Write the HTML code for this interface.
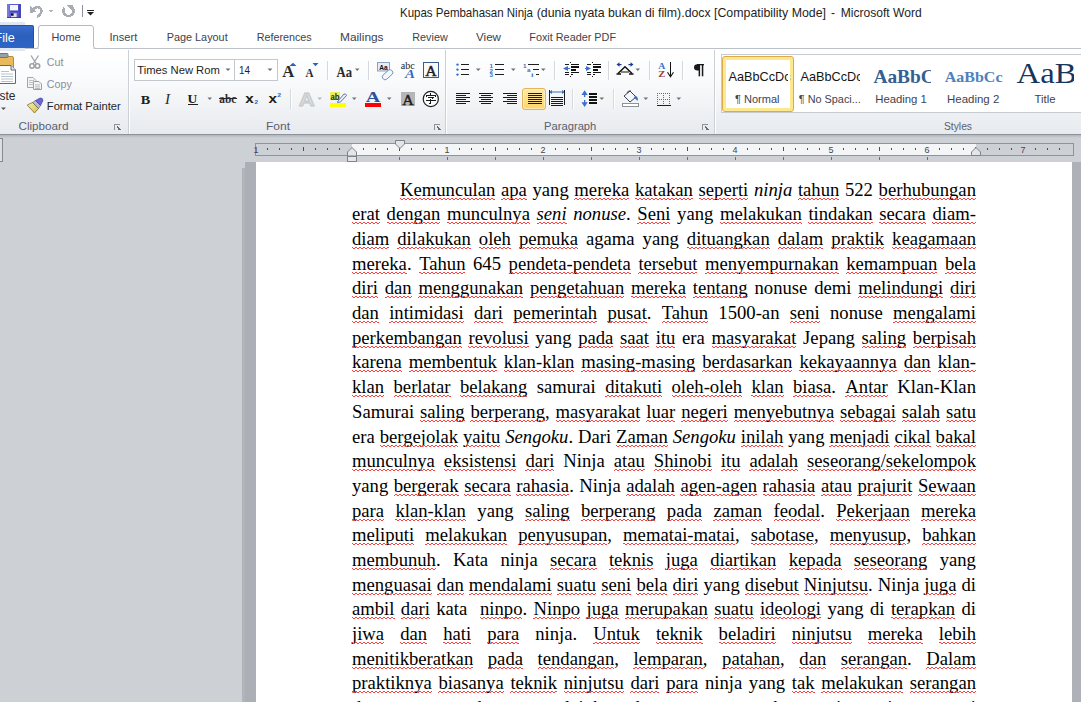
<!DOCTYPE html>
<html><head><meta charset="utf-8"><style>
*{margin:0;padding:0;box-sizing:border-box}
html,body{width:1081px;height:702px;overflow:hidden;background:#cdd0d5;font-family:"Liberation Sans",sans-serif;position:relative}
.a{position:absolute;white-space:nowrap}
#titlebar{position:absolute;left:0;top:0;width:1081px;height:48px;background:#ffffff}
#ribbon{position:absolute;left:0;top:48px;width:1081px;height:86px;background:linear-gradient(#ffffff 0%,#fbfcfd 30%,#eef0f3 75%,#e9ecef 100%);border-top:1px solid #c4c8ce}
#ribbonbottom{position:absolute;left:0;top:134px;width:1081px;height:1px;background:#8f959d}
#rbshade{position:absolute;left:0;top:135px;width:1081px;height:3px;background:linear-gradient(#b7bbc0,#cdd0d5)}
.title{font-size:12px;color:#3c3c3c;top:5px}
.tab{font-size:12px;color:#3b3b3b;top:30px}
.glabel{font-size:12px;color:#5c6270;top:118px}
.sep{position:absolute;width:1px;background:#c9ced5;box-shadow:1px 0 0 #fff}
.gsep{position:absolute;top:53px;height:80px;width:1px;background:#d1d5da;box-shadow:1px 0 0 #ffffff,-1px 0 0 #fbfbfc}
#page{position:absolute;left:256px;top:162px;width:816px;height:540px;background:#fff}
#shadowL{position:absolute;left:245px;top:162px;width:11px;height:540px;background:#acb0b6}
#shadowL2{position:absolute;left:242px;top:168px;width:3px;height:534px;background:#b1b5ba}
#shadowR{position:absolute;left:1072px;top:162px;width:9px;height:540px;background:#aeb2b8}
#text{position:absolute;left:0;top:0}
.ln{position:absolute;left:352px;width:624px;font-family:"Liberation Serif",serif;font-size:18.667px;line-height:20px;color:#000;text-align:justify;text-align-last:justify;white-space:pre-wrap}
.ln.first{left:400px;width:576px}
.s{position:relative}
.s::before,.s::after{content:"";position:absolute;left:0;right:0;height:1px;background-attachment:fixed}
.s::before{top:19.3px;background-image:repeating-linear-gradient(90deg,#ff4040 0 1px,transparent 1px 3px,#ff4040 3px 4px)}
.s::after{top:20.3px;background-image:repeating-linear-gradient(90deg,transparent 0 1px,#ff4040 1px 3px,transparent 3px 4px)}
#ruler{position:absolute;left:255px;top:143px;width:819px;height:13px;border:1px solid #8d929a;background:#ced1d6}
#rulerw{position:absolute;left:352px;top:144px;width:624px;height:11px;background:#f5f6f7}
.rn{position:absolute;font-size:10px;color:#5a5a5a;top:143px}
.rd{position:absolute;width:1px;height:2px;background:#505050;top:148px}
.rt{position:absolute;width:1px;height:4px;background:#505050;top:147px}
.tb{position:absolute;width:1px;height:3px;background:#6e7379;top:157px}

</style></head><body>
<svg id="rsvg" width="1081" height="162" viewBox="0 0 1081 162" style="position:absolute;left:0;top:0" shape-rendering="crispEdges">
<defs>
<linearGradient id="ribg" x1="0" y1="0" x2="0" y2="1"><stop offset="0" stop-color="#ffffff"/><stop offset="0.35" stop-color="#fafbfc"/><stop offset="1" stop-color="#e7eaee"/></linearGradient>
<linearGradient id="fileg" x1="0" y1="0" x2="0" y2="1"><stop offset="0" stop-color="#3a6fcf"/><stop offset="0.5" stop-color="#2b5fbd"/><stop offset="1" stop-color="#2e66c6"/></linearGradient>
<linearGradient id="shd" x1="0" y1="0" x2="0" y2="1"><stop offset="0" stop-color="#b3b7bc"/><stop offset="1" stop-color="#cdd0d5"/></linearGradient>
<linearGradient id="selg" x1="0" y1="0" x2="0" y2="1"><stop offset="0" stop-color="#fde9a8"/><stop offset="1" stop-color="#fbd568"/></linearGradient>
</defs>
<rect x="0" y="0" width="1081" height="49" fill="#ffffff"/>
<rect x="0" y="49" width="1081" height="85" fill="url(#ribg)"/>
<rect x="0" y="48" width="1081" height="1" fill="#bcc1c8"/>
<rect x="0" y="134" width="1081" height="1" fill="#8d939b"/>
<rect x="0" y="135" width="1081" height="3" fill="url(#shd)"/>
<rect x="0" y="138" width="1081" height="24" fill="#cdd0d5"/>
<g shape-rendering="geometricPrecision">
<rect x="7" y="4" width="14" height="14" fill="#5b5dd2"/>
<rect x="7" y="4" width="2.5" height="14" fill="#7778e2"/>
<rect x="18.5" y="4" width="2.5" height="14" fill="#4446b4"/>
<rect x="7" y="17" width="14" height="1" fill="#3c3e9e"/>
<rect x="10" y="5" width="8" height="6" fill="#f4f6fb"/>
<rect x="10" y="10.5" width="8" height="1.2" fill="#3b3da8"/>
<rect x="11" y="13.3" width="5.6" height="3.8" fill="#dfe2ea"/>
<rect x="11" y="13.3" width="2.6" height="2.4" fill="#111"/>
</g>
<path d="M33 9 Q38 5 41 9 Q43 13 37 17" fill="none" stroke="#a9adb3" stroke-width="2.6"/>
<path d="M30 6 L30 13 L36 12 Z" fill="#a9adb3"/>
<path d="M48 10 L53 10 L50.5 12.5 Z" fill="#b0b4b9"/>
<path d="M64.5 8 A5 5 0 1 0 72.5 8" fill="none" stroke="#a9adb3" stroke-width="2.6"/>
<path d="M66 5 L73 4.5 L72 11 Z" fill="#a9adb3"/>
</g>
<rect x="82" y="5" width="1" height="12" fill="#8c9097"/>
<rect x="87" y="10" width="7" height="1" fill="#222"/>
<path d="M87 12 L94 12 L90.5 15.5 Z" fill="#222" shape-rendering="geometricPrecision"/>
<text x="400" y="16.7" font-family="Liberation Sans" font-size="12.4" fill="#1e1e1e" font-weight="normal" font-style="normal" text-anchor="start" textLength="133" lengthAdjust="spacingAndGlyphs" >Kupas Pembahasan Ninja</text>
<text x="536.7" y="16.7" font-family="Liberation Sans" font-size="12.4" fill="#1e1e1e" font-weight="normal" font-style="normal" text-anchor="start" textLength="174" lengthAdjust="spacingAndGlyphs" >(dunia nyata bukan di film).docx</text>
<text x="714" y="16.7" font-family="Liberation Sans" font-size="12.4" fill="#1e1e1e" font-weight="normal" font-style="normal" text-anchor="start" textLength="112" lengthAdjust="spacingAndGlyphs" >[Compatibility Mode]</text>
<text x="831" y="16.7" font-family="Liberation Sans" font-size="12.4" fill="#1e1e1e" font-weight="normal" font-style="normal" text-anchor="start" textLength="4" lengthAdjust="spacingAndGlyphs" >-</text>
<text x="840.7" y="16.7" font-family="Liberation Sans" font-size="12.4" fill="#1e1e1e" font-weight="normal" font-style="normal" text-anchor="start" textLength="81" lengthAdjust="spacingAndGlyphs" >Microsoft Word</text>
<rect x="0" y="22" width="25" height="3" fill="#dfe7f3"/>
<rect x="0" y="48" width="25" height="3" fill="#dfe7f3"/>
<path d="M0 25 L32 25 Q34 25 34 27 L34 48 L0 48 Z" fill="url(#fileg)" stroke="none" shape-rendering="geometricPrecision"/>
<path d="M0 25.5 L31.5 25.5 Q33.5 25.5 33.5 27.5 L33.5 48" fill="none" stroke="#2450a8" shape-rendering="geometricPrecision"/>
<text x="14.7" y="41.6" font-family="Liberation Sans" font-size="12.5" fill="#ffffff" font-weight="normal" font-style="normal" text-anchor="end" >File</text>
<path d="M34 48.5 L36 48.5 Q38.5 48.5 38.5 46 L38.5 28 Q38.5 25.5 41 25.5 L91 25.5 Q93.5 25.5 93.5 28 L93.5 46 Q93.5 48.5 96 48.5" fill="#ffffff" stroke="#b6bbc2" shape-rendering="geometricPrecision"/>
<rect x="39" y="47" width="54" height="3" fill="#ffffff"/>
<text x="51.5" y="40.7" font-family="Liberation Sans" font-size="11.5" fill="#3e434a" font-weight="normal" font-style="normal" text-anchor="start" textLength="29" lengthAdjust="spacingAndGlyphs" >Home</text>
<text x="109.5" y="40.7" font-family="Liberation Sans" font-size="11.5" fill="#3e434a" font-weight="normal" font-style="normal" text-anchor="start" textLength="27.8" lengthAdjust="spacingAndGlyphs" >Insert</text>
<text x="166.7" y="40.7" font-family="Liberation Sans" font-size="11.5" fill="#3e434a" font-weight="normal" font-style="normal" text-anchor="start" textLength="61" lengthAdjust="spacingAndGlyphs" >Page Layout</text>
<text x="256.7" y="40.7" font-family="Liberation Sans" font-size="11.5" fill="#3e434a" font-weight="normal" font-style="normal" text-anchor="start" textLength="55" lengthAdjust="spacingAndGlyphs" >References</text>
<text x="340" y="40.7" font-family="Liberation Sans" font-size="11.5" fill="#3e434a" font-weight="normal" font-style="normal" text-anchor="start" textLength="43.5" lengthAdjust="spacingAndGlyphs" >Mailings</text>
<text x="412.3" y="40.7" font-family="Liberation Sans" font-size="11.5" fill="#3e434a" font-weight="normal" font-style="normal" text-anchor="start" textLength="35.4" lengthAdjust="spacingAndGlyphs" >Review</text>
<text x="476" y="40.7" font-family="Liberation Sans" font-size="11.5" fill="#3e434a" font-weight="normal" font-style="normal" text-anchor="start" textLength="25" lengthAdjust="spacingAndGlyphs" >View</text>
<text x="529.3" y="40.7" font-family="Liberation Sans" font-size="11.5" fill="#3e434a" font-weight="normal" font-style="normal" text-anchor="start" textLength="86.7" lengthAdjust="spacingAndGlyphs" >Foxit Reader PDF</text>
<rect x="128" y="50" width="1" height="84" fill="#cbd0d6"/>
<rect x="129" y="50" width="1" height="84" fill="#ffffff"/>
<rect x="445" y="50" width="1" height="84" fill="#cbd0d6"/>
<rect x="446" y="50" width="1" height="84" fill="#ffffff"/>
<rect x="714" y="50" width="1" height="84" fill="#cbd0d6"/>
<rect x="715" y="50" width="1" height="84" fill="#ffffff"/>
<text x="18.5" y="130.4" font-family="Liberation Sans" font-size="11.5" fill="#5a6070" font-weight="normal" font-style="normal" text-anchor="start" textLength="50" lengthAdjust="spacingAndGlyphs" >Clipboard</text>
<text x="266" y="130.4" font-family="Liberation Sans" font-size="11.5" fill="#5a6070" font-weight="normal" font-style="normal" text-anchor="start" textLength="24" lengthAdjust="spacingAndGlyphs" >Font</text>
<text x="544.1" y="130.4" font-family="Liberation Sans" font-size="11.5" fill="#5a6070" font-weight="normal" font-style="normal" text-anchor="start" textLength="52.2" lengthAdjust="spacingAndGlyphs" >Paragraph</text>
<text x="944" y="130.4" font-family="Liberation Sans" font-size="11.5" fill="#5a6070" font-weight="normal" font-style="normal" text-anchor="start" textLength="28" lengthAdjust="spacingAndGlyphs" >Styles</text>
<g fill="none" stroke="#8d9299" shape-rendering="crispEdges"><path d="M114.5 130 L114.5 124.5 L120 124.5"/><path d="M117 126 L120 130 M117.5 129.5 L121 129.5" stroke="#6b7078"/></g>
<g fill="none" stroke="#8d9299" shape-rendering="crispEdges"><path d="M434.5 130 L434.5 124.5 L440 124.5"/><path d="M437 126 L440 130 M437.5 129.5 L441 129.5" stroke="#6b7078"/></g>
<g fill="none" stroke="#8d9299" shape-rendering="crispEdges"><path d="M702.5 130 L702.5 124.5 L708 124.5"/><path d="M705 126 L708 130 M705.5 129.5 L709 129.5" stroke="#6b7078"/></g>
<g shape-rendering="geometricPrecision">
<rect x="-3.5" y="56.5" width="17" height="14" rx="1.5" fill="#e9b95c" stroke="#b98a3a"/>
<rect x="-2" y="53.5" width="10" height="4" rx="1" fill="#9aa0a8" stroke="#6f757d"/>
<path d="M-1.5 65.5 L11 65.5 L15.5 70 L15.5 83.5 L-1.5 83.5 Z" fill="#ffffff" stroke="#5d6c82"/>
<path d="M11 65.5 L11 70 L15.5 70" fill="#dfe6ef" stroke="#5d6c82"/>
<rect x="1" y="71" width="8" height="1" fill="#b8c2cf"/>
<rect x="1" y="73.5" width="12" height="1" fill="#b8c2cf"/>
<rect x="1" y="76" width="12" height="1" fill="#b8c2cf"/>
<rect x="1" y="78.5" width="12" height="1" fill="#b8c2cf"/>
<rect x="1" y="81" width="12" height="1" fill="#b8c2cf"/>
</g>
<text x="15.5" y="100" font-family="Liberation Sans" font-size="12" fill="#2b2b2b" font-weight="normal" font-style="normal" text-anchor="end" >Paste</text>
<path d="M1 107.5 L6 107.5 L3.5 110 Z" fill="#555" shape-rendering="geometricPrecision"/>
<g shape-rendering="geometricPrecision" fill="none" stroke="#9ea2a8" stroke-width="1.3">
<path d="M31 55.5 L36.5 64 M38.5 55.5 L33 64"/>
<circle cx="32" cy="66" r="2.2" stroke-width="1.6"/><circle cx="37.5" cy="66" r="2.2" stroke-width="1.6"/>
</g>
<text x="46.8" y="65.9" font-family="Liberation Sans" font-size="11.5" fill="#8b8f9c" font-weight="normal" font-style="normal" text-anchor="start" textLength="16.6" lengthAdjust="spacingAndGlyphs" >Cut</text>
<g shape-rendering="geometricPrecision">
<path d="M27.5 77.5 L33 77.5 L36 80.5 L36 87.5 L27.5 87.5 Z" fill="#f4f4f4" stroke="#a3a7ad"/>
<path d="M33.5 81.5 L39 81.5 L41.5 84 L41.5 89.5 L33.5 89.5 Z" fill="#f4f4f4" stroke="#9b9fa5"/>
<rect x="29" y="80" width="5" height="0.8" fill="#b0b4ba"/>
<rect x="29" y="82" width="5" height="0.8" fill="#b0b4ba"/>
<rect x="29" y="84" width="5" height="0.8" fill="#b0b4ba"/>
<rect x="35" y="84.5" width="5" height="0.8" fill="#a9adb3"/>
<rect x="35" y="86.5" width="5" height="0.8" fill="#a9adb3"/>
<rect x="35" y="88" width="5" height="0.8" fill="#a9adb3"/>
</g>
<text x="46.8" y="87.6" font-family="Liberation Sans" font-size="11.5" fill="#8b8f9c" font-weight="normal" font-style="normal" text-anchor="start" textLength="25" lengthAdjust="spacingAndGlyphs" >Copy</text>
<defs><linearGradient id="brg" x1="0" y1="0" x2="1" y2="1"><stop offset="0" stop-color="#fbf3a8"/><stop offset="1" stop-color="#d6bd48"/></linearGradient></defs>
<g shape-rendering="geometricPrecision">
<path d="M27.2 105 L32.5 102.5 L38.5 108.5 L34.5 113 Z" fill="url(#brg)" stroke="#6e5e22" stroke-width="0.7"/>
<path d="M32.5 102.5 L35.5 100.5 L40.5 105.5 L38.5 108.5 Z" fill="#b8bcc6" stroke="#50555e" stroke-width="0.6"/>
<path d="M35.5 100.5 L40 98 Q42.8 97.5 43 100.5 L40.5 105.5 Z" fill="#6a64d6" stroke="#3a3490" stroke-width="0.6"/>
</g>
<text x="46.8" y="110.2" font-family="Liberation Sans" font-size="11.5" fill="#262626" font-weight="normal" font-style="normal" text-anchor="start" textLength="74" lengthAdjust="spacingAndGlyphs" >Format Painter</text>
<rect x="134.5" y="59.5" width="143" height="21" fill="#ffffff" stroke="#c3c8cf"/>
<rect x="234" y="60" width="1" height="20" fill="#c3c8cf"/>
<text x="137.3" y="73.9" font-family="Liberation Sans" font-size="11.5" fill="#1e1e1e" font-weight="normal" font-style="normal" text-anchor="start" textLength="82.5" lengthAdjust="spacingAndGlyphs" >Times New Rom</text>
<rect x="219.5" y="62" width="3" height="16" fill="#ffffff"/>
<path d="M225.5 68.5 L230.5 68.5 L228 71 Z" fill="#6d7177" shape-rendering="geometricPrecision"/>
<text x="239" y="73.9" font-family="Liberation Sans" font-size="11.5" fill="#1e1e1e" font-weight="normal" font-style="normal" text-anchor="start" textLength="11" lengthAdjust="spacingAndGlyphs" >14</text>
<path d="M267.5 68.5 L272.5 68.5 L270 71 Z" fill="#6d7177" shape-rendering="geometricPrecision"/>
<text x="282.3" y="77.2" font-family="Liberation Serif" font-size="17.5" fill="#2a2a2a" font-weight="bold" font-style="normal" text-anchor="start" textLength="12" lengthAdjust="spacingAndGlyphs" >A</text>
<path d="M289.5 66 L293 62.8 L296.5 66 Z" fill="#2f5fb5" shape-rendering="geometricPrecision"/>
<text x="305.5" y="77.2" font-family="Liberation Serif" font-size="11.5" fill="#2a2a2a" font-weight="bold" font-style="normal" text-anchor="start" textLength="8" lengthAdjust="spacingAndGlyphs" >A</text>
<path d="M312.5 63 L318.5 63 L315.5 66.2 Z" fill="#2f5fb5" shape-rendering="geometricPrecision"/>
<rect x="327" y="61" width="1" height="19" fill="#d5d9de"/><rect x="328" y="61" width="1" height="19" fill="#fff"/>
<text x="336.5" y="76.5" font-family="Liberation Serif" font-size="14" fill="#2a2a2a" font-weight="bold" font-style="normal" text-anchor="start" textLength="15.5" lengthAdjust="spacingAndGlyphs" >Aa</text>
<path d="M355 68.5 L359.5 68.5 L357.2 71 Z" fill="#6d7177" shape-rendering="geometricPrecision"/>
<rect x="368" y="61" width="1" height="19" fill="#d5d9de"/><rect x="369" y="61" width="1" height="19" fill="#fff"/>
<g shape-rendering="geometricPrecision">
<rect x="377.5" y="62.5" width="12" height="8.5" fill="#e3ecf8" stroke="#8aa3c4"/>
<text x="379.2" y="69.8" font-family="Liberation Sans" font-size="7" fill="#111111" font-weight="bold" font-style="normal" text-anchor="start" textLength="8.5" lengthAdjust="spacingAndGlyphs" >Aa</text>
<rect x="381.5" y="72" width="12" height="5.5" rx="2.5" transform="rotate(-42 387.5 74.7)" fill="#f4f7fc" stroke="#6a8dc0" stroke-width="0.9"/>
</g>
<text x="400.8" y="68.8" font-family="Liberation Serif" font-size="10.5" fill="#222222" font-weight="normal" font-style="normal" text-anchor="start" textLength="14" lengthAdjust="spacingAndGlyphs" >abc</text>
<text x="405" y="78.3" font-family="Liberation Serif" font-size="11.5" fill="#3567c0" font-weight="bold" font-style="italic" text-anchor="start" textLength="10" lengthAdjust="spacingAndGlyphs" >A</text>
<rect x="423.5" y="62.5" width="15" height="15" fill="#fafafa" stroke="#3c5d8c"/>
<text x="425.3" y="76" font-family="Liberation Serif" font-size="15" fill="#1e1e1e" font-weight="normal" font-style="normal" text-anchor="start" textLength="11.5" lengthAdjust="spacingAndGlyphs" stroke="#1e1e1e" stroke-width="0.45">A</text>
<text x="140.7" y="103.6" font-family="Liberation Serif" font-size="13.5" fill="#1e1e1e" font-weight="bold" font-style="normal" text-anchor="start" textLength="9.5" lengthAdjust="spacingAndGlyphs" >B</text>
<text x="165" y="103.6" font-family="Liberation Serif" font-size="15" fill="#2a2a2a" font-weight="normal" font-style="italic" text-anchor="start" >I</text>
<text x="187.6" y="103.3" font-family="Liberation Serif" font-size="13" fill="#1e1e1e" font-weight="bold" font-style="normal" text-anchor="start" textLength="9.7" lengthAdjust="spacingAndGlyphs" >U</text>
<rect x="187.5" y="104" width="10" height="1" fill="#1e1e1e"/>
<path d="M207.5 97.5 L212 97.5 L209.7 100 Z" fill="#6d7177" shape-rendering="geometricPrecision"/>
<text x="219.3" y="102.7" font-family="Liberation Serif" font-size="11.5" fill="#2a2a2a" font-weight="bold" font-style="normal" text-anchor="start" textLength="17" lengthAdjust="spacingAndGlyphs" >abc</text>
<rect x="219" y="98" width="17.5" height="1" fill="#2a2a2a"/>
<text x="245.3" y="103.3" font-family="Liberation Sans" font-size="13.5" fill="#1e1e1e" font-weight="bold" font-style="normal" text-anchor="start" textLength="8.5" lengthAdjust="spacingAndGlyphs" >x</text>
<text x="254.5" y="104.3" font-family="Liberation Sans" font-size="5.5" fill="#2f5fb5" font-weight="bold" font-style="normal" text-anchor="start" textLength="3.5" lengthAdjust="spacingAndGlyphs" >2</text>
<text x="268.4" y="103.3" font-family="Liberation Sans" font-size="13.5" fill="#1e1e1e" font-weight="bold" font-style="normal" text-anchor="start" textLength="8.5" lengthAdjust="spacingAndGlyphs" >x</text>
<text x="277.5" y="97.3" font-family="Liberation Sans" font-size="5.5" fill="#2f5fb5" font-weight="bold" font-style="normal" text-anchor="start" textLength="3.5" lengthAdjust="spacingAndGlyphs" >2</text>
<rect x="290" y="89" width="1" height="20" fill="#d5d9de"/><rect x="291" y="89" width="1" height="20" fill="#fff"/>
<text x="298.8" y="105.8" font-family="Liberation Sans" font-size="18" fill="#d8dadd" font-weight="bold" font-style="normal" text-anchor="start" textLength="16" lengthAdjust="spacingAndGlyphs" stroke="#c3c6ca" stroke-width="0.8">A</text>
<path d="M317.5 97.5 L322 97.5 L319.7 100 Z" fill="#b3b6ba" shape-rendering="geometricPrecision"/>
<rect x="330" y="103" width="16" height="4" fill="#ffff00"/>
<rect x="330" y="92" width="10" height="8" fill="#f0ee60"/>
<text x="330.5" y="99.5" font-family="Liberation Sans" font-size="8.5" fill="#1e1e1e" font-weight="bold" font-style="normal" text-anchor="start" textLength="9" lengthAdjust="spacingAndGlyphs" >ab</text>
<path d="M338 101 L344 94 Q346 93.5 346.5 95.5 L340.5 102 L337.5 102.5 Z" fill="#e6eef8" stroke="#4a6fa8" stroke-width="0.9" shape-rendering="geometricPrecision"/>
<path d="M352 97.5 L356.5 97.5 L354.2 100 Z" fill="#6d7177" shape-rendering="geometricPrecision"/>
<text x="365.8" y="102.3" font-family="Liberation Serif" font-size="14.5" fill="#2f4f9a" font-weight="bold" font-style="normal" text-anchor="start" textLength="14.5" lengthAdjust="spacingAndGlyphs" >A</text>
<rect x="365" y="103" width="16" height="4" fill="#ff0000"/>
<path d="M387 97.5 L391.5 97.5 L389.2 100 Z" fill="#6d7177" shape-rendering="geometricPrecision"/>
<rect x="401" y="92" width="14" height="14" fill="#b6b6b6"/>
<text x="402.3" y="104.5" font-family="Liberation Serif" font-size="15" fill="#1e1e1e" font-weight="normal" font-style="normal" text-anchor="start" textLength="11.5" lengthAdjust="spacingAndGlyphs" stroke="#1e1e1e" stroke-width="0.45">A</text>
<circle cx="430.8" cy="99" r="7.6" fill="#fafafa" stroke="#1e1e1e" stroke-width="1.2" shape-rendering="geometricPrecision"/>
<g fill="#1a1a1a" shape-rendering="crispEdges"><rect x="430" y="93" width="1" height="2"/><rect x="426" y="95" width="10" height="1"/><rect x="426" y="95" width="1" height="2"/><rect x="435" y="95" width="1" height="2"/><rect x="428" y="97" width="6" height="1"/><rect x="432" y="98" width="1" height="1"/><rect x="426" y="100" width="10" height="1"/><rect x="430" y="99" width="1" height="5"/><rect x="429" y="103" width="1" height="1"/></g>
<circle cx="457.5" cy="64.6" r="1.2" fill="#3a6fc4" shape-rendering="geometricPrecision"/>
<circle cx="457.5" cy="69.6" r="1.2" fill="#3a6fc4" shape-rendering="geometricPrecision"/>
<circle cx="457.5" cy="74.6" r="1.2" fill="#3a6fc4" shape-rendering="geometricPrecision"/>
<rect x="461" y="64" width="8" height="1.2" fill="#1e1e1e"/>
<rect x="461" y="69" width="8" height="1.2" fill="#1e1e1e"/>
<rect x="461" y="74" width="8" height="1.2" fill="#1e1e1e"/>
<path d="M476 68.5 L480.6 68.5 L478.3 71.0 Z" fill="#6d7177" shape-rendering="geometricPrecision"/>
<text x="489.5" y="67.5" font-family="Liberation Sans" font-size="6" fill="#3a6fc4" font-weight="bold" font-style="normal" text-anchor="start" textLength="3.5" lengthAdjust="spacingAndGlyphs" >1</text>
<text x="489.5" y="72.5" font-family="Liberation Sans" font-size="6" fill="#3a6fc4" font-weight="bold" font-style="normal" text-anchor="start" textLength="3.5" lengthAdjust="spacingAndGlyphs" >2</text>
<text x="489.5" y="77" font-family="Liberation Sans" font-size="6" fill="#3a6fc4" font-weight="bold" font-style="normal" text-anchor="start" textLength="3.5" lengthAdjust="spacingAndGlyphs" >3</text>
<rect x="495" y="64" width="9" height="1.2" fill="#1e1e1e"/>
<rect x="495" y="69" width="9" height="1.2" fill="#1e1e1e"/>
<rect x="495" y="74" width="9" height="1.2" fill="#1e1e1e"/>
<path d="M511 68.5 L515.6 68.5 L513.3 71.0 Z" fill="#6d7177" shape-rendering="geometricPrecision"/>
<text x="523" y="67.5" font-family="Liberation Sans" font-size="6" fill="#3a6fc4" font-weight="bold" font-style="normal" text-anchor="start" textLength="3.5" lengthAdjust="spacingAndGlyphs" >1</text>
<text x="527" y="72" font-family="Liberation Sans" font-size="6" fill="#3a6fc4" font-weight="bold" font-style="normal" text-anchor="start" textLength="3.5" lengthAdjust="spacingAndGlyphs" >a</text>
<text x="531" y="77" font-family="Liberation Sans" font-size="6" fill="#3a6fc4" font-weight="bold" font-style="normal" text-anchor="start" textLength="2.5" lengthAdjust="spacingAndGlyphs" >i</text>
<rect x="528" y="64" width="11" height="1.2" fill="#1e1e1e"/>
<rect x="533" y="69" width="6" height="1.2" fill="#1e1e1e"/>
<rect x="536" y="74" width="3" height="1.2" fill="#1e1e1e"/>
<path d="M541 68.5 L545.6 68.5 L543.3 71.0 Z" fill="#6d7177" shape-rendering="geometricPrecision"/>
<rect x="554" y="61" width="1" height="19" fill="#d5d9de"/><rect x="555" y="61" width="1" height="19" fill="#fff"/>
<rect x="570" y="62" width="1" height="1" fill="#1a1a1a"/><rect x="570" y="76" width="1" height="1" fill="#1a1a1a"/>
<rect x="565" y="64" width="4" height="1" fill="#1a1a1a"/>
<rect x="565" y="72" width="4" height="1" fill="#1a1a1a"/>
<rect x="565" y="74" width="4" height="1" fill="#1a1a1a"/>
<rect x="571" y="64" width="8" height="1" fill="#111"/>
<rect x="571" y="66" width="8" height="2" fill="#111"/>
<rect x="571" y="69" width="5" height="2" fill="#111"/>
<rect x="571" y="72" width="8" height="1" fill="#111"/>
<rect x="571" y="74" width="2" height="1" fill="#111"/>
<path d="M563 68.5 L568 66 L568 71 Z" fill="#3a6fd0" shape-rendering="geometricPrecision"/>
<rect x="567.5" y="68" width="2" height="1.2" fill="#3a6fd0"/>
<rect x="592" y="62" width="1" height="1" fill="#1a1a1a"/><rect x="592" y="76" width="1" height="1" fill="#1a1a1a"/>
<rect x="587" y="64" width="4" height="1" fill="#1a1a1a"/>
<rect x="587" y="72" width="4" height="1" fill="#1a1a1a"/>
<rect x="587" y="74" width="4" height="1" fill="#1a1a1a"/>
<rect x="593" y="64" width="8" height="1" fill="#111"/>
<rect x="593" y="66" width="8" height="2" fill="#111"/>
<rect x="593" y="69" width="5" height="2" fill="#111"/>
<rect x="593" y="72" width="8" height="1" fill="#111"/>
<rect x="593" y="74" width="2" height="1" fill="#111"/>
<path d="M591 68.5 L586 66 L586 71 Z" fill="#3a6fd0" shape-rendering="geometricPrecision"/>
<rect x="585" y="68" width="2" height="1.2" fill="#3a6fd0"/>
<rect x="608" y="61" width="1" height="19" fill="#d5d9de"/><rect x="609" y="61" width="1" height="19" fill="#fff"/>
<g shape-rendering="geometricPrecision" fill="none" stroke="#111" stroke-width="1.5"><path d="M618 73.5 L625 66.8 L632 73.5"/><path d="M616.5 74 L621 74 M629 74 L633.5 74" stroke-width="1.3"/><path d="M621 72 L629 72" stroke-width="1"/></g>
<g shape-rendering="geometricPrecision" fill="#1a3a9a"><path d="M616.5 64.5 L619.5 62.3 L619.5 66.7 Z M633.5 64.5 L630.5 62.3 L630.5 66.7 Z"/><rect x="619" y="64" width="2.5" height="1.2"/><rect x="628.5" y="64" width="2.5" height="1.2"/></g>
<path d="M635.5 68.5 L640.1 68.5 L637.8 71.0 Z" fill="#6d7177" shape-rendering="geometricPrecision"/>
<rect x="649" y="61" width="1" height="19" fill="#d5d9de"/><rect x="650" y="61" width="1" height="19" fill="#fff"/>
<text x="658.3" y="69" font-family="Liberation Serif" font-size="8.5" fill="#3a6fc4" font-weight="bold" font-style="normal" text-anchor="start" textLength="7" lengthAdjust="spacingAndGlyphs" >A</text>
<text x="658.3" y="77" font-family="Liberation Serif" font-size="8.5" fill="#a33a3a" font-weight="bold" font-style="normal" text-anchor="start" textLength="7" lengthAdjust="spacingAndGlyphs" >Z</text>
<rect x="670" y="62" width="1" height="14.5" fill="#111"/>
<path d="M667.5 72.3 L670.5 76.8 L673.5 72.3" fill="none" stroke="#111" stroke-width="1.1" shape-rendering="geometricPrecision"/>
<rect x="682" y="61" width="1" height="19" fill="#d5d9de"/><rect x="683" y="61" width="1" height="19" fill="#fff"/>
<g shape-rendering="geometricPrecision" fill="#1a1a1a"><path d="M699.5 64.2 L697.5 64.2 Q694 64.2 694 67.3 Q694 70.5 697.5 70.5 L699.5 70.5 Z"/><rect x="698.6" y="64" width="1.5" height="12.3"/><rect x="701.8" y="64" width="1.5" height="12.3"/><rect x="697" y="64" width="7" height="1.3"/></g>
<rect x="456" y="93" width="14" height="1" fill="#1a1a1a"/>
<rect x="456" y="95" width="10" height="1" fill="#1a1a1a"/>
<rect x="456" y="97" width="14" height="1" fill="#1a1a1a"/>
<rect x="456" y="99" width="10" height="1" fill="#1a1a1a"/>
<rect x="456" y="101" width="14" height="1" fill="#1a1a1a"/>
<rect x="456" y="103" width="10" height="1" fill="#1a1a1a"/>
<rect x="479.0" y="93" width="14" height="1" fill="#1a1a1a"/>
<rect x="481.0" y="95" width="10" height="1" fill="#1a1a1a"/>
<rect x="479.0" y="97" width="14" height="1" fill="#1a1a1a"/>
<rect x="481.0" y="99" width="10" height="1" fill="#1a1a1a"/>
<rect x="479.0" y="101" width="14" height="1" fill="#1a1a1a"/>
<rect x="481.0" y="103" width="10" height="1" fill="#1a1a1a"/>
<rect x="503" y="93" width="14" height="1" fill="#1a1a1a"/>
<rect x="507" y="95" width="10" height="1" fill="#1a1a1a"/>
<rect x="503" y="97" width="14" height="1" fill="#1a1a1a"/>
<rect x="507" y="99" width="10" height="1" fill="#1a1a1a"/>
<rect x="503" y="101" width="14" height="1" fill="#1a1a1a"/>
<rect x="507" y="103" width="10" height="1" fill="#1a1a1a"/>
<rect x="522.5" y="88.5" width="23" height="21" rx="2.5" fill="url(#selg)" stroke="#e3b45a" shape-rendering="geometricPrecision"/>
<rect x="523.5" y="89.5" width="21" height="19" rx="2" fill="none" stroke="#fff4c8" stroke-opacity="0.7" shape-rendering="geometricPrecision"/>
<rect x="527.5" y="93" width="14" height="1" fill="#1a1a1a"/>
<rect x="527.5" y="95" width="14" height="1" fill="#1a1a1a"/>
<rect x="527.5" y="97" width="14" height="1" fill="#1a1a1a"/>
<rect x="527.5" y="99" width="14" height="1" fill="#1a1a1a"/>
<rect x="527.5" y="101" width="14" height="1" fill="#1a1a1a"/>
<rect x="527.5" y="103" width="14" height="1" fill="#1a1a1a"/>
<g shape-rendering="geometricPrecision">
<path d="M551 92 L563 92" stroke="#3a6fc4" stroke-width="1"/><path d="M549 92 L552 90 L552 94 Z M565 92 L562 90 L562 94 Z" fill="#3a6fc4"/>
<rect x="549" y="90" width="1" height="15" fill="#1e1e1e"/><rect x="564" y="90" width="1" height="15" fill="#1e1e1e"/>
</g>
<rect x="551" y="97" width="12" height="1" fill="#1a1a1a"/>
<rect x="551" y="99" width="12" height="1" fill="#1a1a1a"/>
<rect x="551" y="101" width="12" height="1" fill="#1a1a1a"/>
<rect x="551" y="103" width="12" height="1" fill="#1a1a1a"/>
<rect x="551" y="105" width="12" height="1" fill="#1a1a1a"/>
<rect x="572" y="89" width="1" height="20" fill="#d5d9de"/><rect x="573" y="89" width="1" height="20" fill="#fff"/>
<g shape-rendering="geometricPrecision" fill="#3a6fd0"><path d="M581.5 95 L584.6 90.3 L587.7 95 Z M581.5 102.3 L584.6 107 L587.7 102.3 Z"/><rect x="584" y="93" width="1.3" height="4"/><rect x="584" y="100" width="1.3" height="4"/></g>
<rect x="589" y="93.3" width="8" height="1.5" fill="#111"/>
<rect x="589" y="96.3" width="8" height="1.5" fill="#111"/>
<rect x="589" y="99.3" width="8" height="1.5" fill="#111"/>
<rect x="589" y="102.3" width="8" height="1.5" fill="#111"/>
<path d="M599.5 97.5 L604.1 97.5 L601.8 100.0 Z" fill="#6d7177" shape-rendering="geometricPrecision"/>
<rect x="613" y="89" width="1" height="20" fill="#d5d9de"/><rect x="614" y="89" width="1" height="20" fill="#fff"/>
<g shape-rendering="geometricPrecision">
<rect x="622.5" y="103.5" width="16" height="3" fill="#ffffff" stroke="#8d9299"/>
<path d="M624 96 L630 91 L636 97 L630 102 Z" fill="#f3f6fa" stroke="#39414d" stroke-width="1"/>
<path d="M627 93 Q628 90 631 91" fill="none" stroke="#39414d" stroke-width="0.9"/>
<path d="M635 95.5 Q639 97 637.5 101 Q636 99 634 98 Z" fill="#3a6fc4"/>
</g>
<path d="M643.5 97.5 L648.1 97.5 L645.8 100.0 Z" fill="#6d7177" shape-rendering="geometricPrecision"/>
<rect x="657" y="93" width="1" height="1" fill="#6a6e74"/>
<rect x="659" y="93" width="1" height="1" fill="#6a6e74"/>
<rect x="661" y="93" width="1" height="1" fill="#6a6e74"/>
<rect x="663" y="93" width="1" height="1" fill="#6a6e74"/>
<rect x="665" y="93" width="1" height="1" fill="#6a6e74"/>
<rect x="667" y="93" width="1" height="1" fill="#6a6e74"/>
<rect x="669" y="93" width="1" height="1" fill="#6a6e74"/>
<rect x="657" y="99" width="1" height="1" fill="#6a6e74"/>
<rect x="659" y="99" width="1" height="1" fill="#6a6e74"/>
<rect x="661" y="99" width="1" height="1" fill="#6a6e74"/>
<rect x="663" y="99" width="1" height="1" fill="#6a6e74"/>
<rect x="665" y="99" width="1" height="1" fill="#6a6e74"/>
<rect x="667" y="99" width="1" height="1" fill="#6a6e74"/>
<rect x="669" y="99" width="1" height="1" fill="#6a6e74"/>
<rect x="657" y="105" width="1" height="1" fill="#6a6e74"/>
<rect x="659" y="105" width="1" height="1" fill="#6a6e74"/>
<rect x="661" y="105" width="1" height="1" fill="#6a6e74"/>
<rect x="663" y="105" width="1" height="1" fill="#6a6e74"/>
<rect x="665" y="105" width="1" height="1" fill="#6a6e74"/>
<rect x="667" y="105" width="1" height="1" fill="#6a6e74"/>
<rect x="669" y="105" width="1" height="1" fill="#6a6e74"/>
<rect x="657" y="93" width="1" height="1" fill="#6a6e74"/>
<rect x="657" y="95" width="1" height="1" fill="#6a6e74"/>
<rect x="657" y="97" width="1" height="1" fill="#6a6e74"/>
<rect x="657" y="99" width="1" height="1" fill="#6a6e74"/>
<rect x="657" y="101" width="1" height="1" fill="#6a6e74"/>
<rect x="657" y="103" width="1" height="1" fill="#6a6e74"/>
<rect x="663" y="93" width="1" height="1" fill="#6a6e74"/>
<rect x="663" y="95" width="1" height="1" fill="#6a6e74"/>
<rect x="663" y="97" width="1" height="1" fill="#6a6e74"/>
<rect x="663" y="99" width="1" height="1" fill="#6a6e74"/>
<rect x="663" y="101" width="1" height="1" fill="#6a6e74"/>
<rect x="663" y="103" width="1" height="1" fill="#6a6e74"/>
<rect x="669" y="93" width="1" height="1" fill="#6a6e74"/>
<rect x="669" y="95" width="1" height="1" fill="#6a6e74"/>
<rect x="669" y="97" width="1" height="1" fill="#6a6e74"/>
<rect x="669" y="99" width="1" height="1" fill="#6a6e74"/>
<rect x="669" y="101" width="1" height="1" fill="#6a6e74"/>
<rect x="669" y="103" width="1" height="1" fill="#6a6e74"/>
<rect x="657" y="105" width="14" height="1.2" fill="#1e1e1e"/>
<path d="M676.5 97.5 L681.1 97.5 L678.8 100.0 Z" fill="#6d7177" shape-rendering="geometricPrecision"/>
<rect x="721.5" y="54.5" width="370" height="58" fill="#ffffff" stroke="#c6cbd2"/>
<rect x="722.5" y="56.5" width="71" height="55" rx="2.5" fill="#fde88f" stroke="#dcaa48" shape-rendering="geometricPrecision"/>
<rect x="726" y="60" width="64" height="48" fill="#ffffff"/>
<text x="728.6" y="81" font-family="Liberation Sans" font-size="12.6" fill="#151515" font-weight="normal" font-style="normal" text-anchor="start" textLength="62" lengthAdjust="spacingAndGlyphs" >AaBbCcDc</text>
<rect x="787.5" y="62" width="2.5" height="30" fill="#ffffff"/>
<text x="735" y="102.8" font-family="Liberation Sans" font-size="11" fill="#3e4350" font-weight="normal" font-style="normal" text-anchor="start" textLength="44.5" lengthAdjust="spacingAndGlyphs" >¶ Normal</text>
<text x="800.5" y="81" font-family="Liberation Sans" font-size="12.6" fill="#151515" font-weight="normal" font-style="normal" text-anchor="start" textLength="62" lengthAdjust="spacingAndGlyphs" >AaBbCcDc</text>
<rect x="859.5" y="62" width="6" height="30" fill="#ffffff"/>
<text x="798.8" y="102.8" font-family="Liberation Sans" font-size="11" fill="#3e4350" font-weight="normal" font-style="normal" text-anchor="start" textLength="62" lengthAdjust="spacingAndGlyphs" >¶ No Spaci...</text>
<clipPath id="cph1"><rect x="860" y="58" width="71" height="40"/></clipPath>
<text x="873.4" y="82.9" font-family="Liberation Serif" font-size="19" fill="#365f91" font-weight="bold" font-style="normal" text-anchor="start" textLength="70" lengthAdjust="spacingAndGlyphs" clip-path="url(#cph1)">AaBbCc</text>
<text x="875.2" y="102.8" font-family="Liberation Sans" font-size="11" fill="#3e4350" font-weight="normal" font-style="normal" text-anchor="start" textLength="51.7" lengthAdjust="spacingAndGlyphs" >Heading 1</text>
<text x="944.8" y="82.3" font-family="Liberation Serif" font-size="15.5" fill="#4f81bd" font-weight="bold" font-style="normal" text-anchor="start" textLength="57.7" lengthAdjust="spacingAndGlyphs" >AaBbCc</text>
<text x="947.1" y="102.8" font-family="Liberation Sans" font-size="11" fill="#3e4350" font-weight="normal" font-style="normal" text-anchor="start" textLength="52.2" lengthAdjust="spacingAndGlyphs" >Heading 2</text>
<text x="1016.5" y="82.9" font-family="Liberation Serif" font-size="29" fill="#17365d" font-weight="normal" font-style="normal" text-anchor="start" textLength="60" lengthAdjust="spacingAndGlyphs" >AaB</text>
<rect x="1074" y="58" width="7" height="30" fill="#ffffff"/>
<text x="1034.5" y="102.8" font-family="Liberation Sans" font-size="11" fill="#3e4350" font-weight="normal" font-style="normal" text-anchor="start" textLength="21" lengthAdjust="spacingAndGlyphs" >Title</text>
<rect x="255.5" y="143.5" width="818" height="12" fill="#cdd0d5" stroke="#8e949b"/>
<rect x="352" y="144" width="624" height="11" fill="#f4f5f6"/>
<rect x="267" y="148" width="1" height="2" fill="#4a4e55"/>
<rect x="279" y="148" width="1" height="2" fill="#4a4e55"/>
<rect x="291" y="148" width="1" height="2" fill="#4a4e55"/>
<rect x="303" y="147" width="1" height="4" fill="#4a4e55"/>
<rect x="315" y="148" width="1" height="2" fill="#4a4e55"/>
<rect x="327" y="148" width="1" height="2" fill="#4a4e55"/>
<rect x="339" y="148" width="1" height="2" fill="#4a4e55"/>
<rect x="363" y="148" width="1" height="2" fill="#4a4e55"/>
<rect x="375" y="148" width="1" height="2" fill="#4a4e55"/>
<rect x="387" y="148" width="1" height="2" fill="#4a4e55"/>
<rect x="399" y="147" width="1" height="4" fill="#4a4e55"/>
<rect x="411" y="148" width="1" height="2" fill="#4a4e55"/>
<rect x="423" y="148" width="1" height="2" fill="#4a4e55"/>
<rect x="435" y="148" width="1" height="2" fill="#4a4e55"/>
<text x="447" y="152.5" font-family="Liberation Sans" font-size="9.5" fill="#404652" font-weight="normal" font-style="normal" text-anchor="middle" textLength="5" lengthAdjust="spacingAndGlyphs" >1</text>
<rect x="459" y="148" width="1" height="2" fill="#4a4e55"/>
<rect x="471" y="148" width="1" height="2" fill="#4a4e55"/>
<rect x="483" y="148" width="1" height="2" fill="#4a4e55"/>
<rect x="495" y="147" width="1" height="4" fill="#4a4e55"/>
<rect x="507" y="148" width="1" height="2" fill="#4a4e55"/>
<rect x="519" y="148" width="1" height="2" fill="#4a4e55"/>
<rect x="531" y="148" width="1" height="2" fill="#4a4e55"/>
<text x="543" y="152.5" font-family="Liberation Sans" font-size="9.5" fill="#404652" font-weight="normal" font-style="normal" text-anchor="middle" textLength="5" lengthAdjust="spacingAndGlyphs" >2</text>
<rect x="555" y="148" width="1" height="2" fill="#4a4e55"/>
<rect x="567" y="148" width="1" height="2" fill="#4a4e55"/>
<rect x="579" y="148" width="1" height="2" fill="#4a4e55"/>
<rect x="591" y="147" width="1" height="4" fill="#4a4e55"/>
<rect x="603" y="148" width="1" height="2" fill="#4a4e55"/>
<rect x="615" y="148" width="1" height="2" fill="#4a4e55"/>
<rect x="627" y="148" width="1" height="2" fill="#4a4e55"/>
<text x="639" y="152.5" font-family="Liberation Sans" font-size="9.5" fill="#404652" font-weight="normal" font-style="normal" text-anchor="middle" textLength="5" lengthAdjust="spacingAndGlyphs" >3</text>
<rect x="651" y="148" width="1" height="2" fill="#4a4e55"/>
<rect x="663" y="148" width="1" height="2" fill="#4a4e55"/>
<rect x="675" y="148" width="1" height="2" fill="#4a4e55"/>
<rect x="687" y="147" width="1" height="4" fill="#4a4e55"/>
<rect x="699" y="148" width="1" height="2" fill="#4a4e55"/>
<rect x="711" y="148" width="1" height="2" fill="#4a4e55"/>
<rect x="723" y="148" width="1" height="2" fill="#4a4e55"/>
<text x="735" y="152.5" font-family="Liberation Sans" font-size="9.5" fill="#404652" font-weight="normal" font-style="normal" text-anchor="middle" textLength="5" lengthAdjust="spacingAndGlyphs" >4</text>
<rect x="747" y="148" width="1" height="2" fill="#4a4e55"/>
<rect x="759" y="148" width="1" height="2" fill="#4a4e55"/>
<rect x="771" y="148" width="1" height="2" fill="#4a4e55"/>
<rect x="783" y="147" width="1" height="4" fill="#4a4e55"/>
<rect x="795" y="148" width="1" height="2" fill="#4a4e55"/>
<rect x="807" y="148" width="1" height="2" fill="#4a4e55"/>
<rect x="819" y="148" width="1" height="2" fill="#4a4e55"/>
<text x="831" y="152.5" font-family="Liberation Sans" font-size="9.5" fill="#404652" font-weight="normal" font-style="normal" text-anchor="middle" textLength="5" lengthAdjust="spacingAndGlyphs" >5</text>
<rect x="843" y="148" width="1" height="2" fill="#4a4e55"/>
<rect x="855" y="148" width="1" height="2" fill="#4a4e55"/>
<rect x="867" y="148" width="1" height="2" fill="#4a4e55"/>
<rect x="879" y="147" width="1" height="4" fill="#4a4e55"/>
<rect x="891" y="148" width="1" height="2" fill="#4a4e55"/>
<rect x="903" y="148" width="1" height="2" fill="#4a4e55"/>
<rect x="915" y="148" width="1" height="2" fill="#4a4e55"/>
<text x="927" y="152.5" font-family="Liberation Sans" font-size="9.5" fill="#404652" font-weight="normal" font-style="normal" text-anchor="middle" textLength="5" lengthAdjust="spacingAndGlyphs" >6</text>
<rect x="939" y="148" width="1" height="2" fill="#4a4e55"/>
<rect x="951" y="148" width="1" height="2" fill="#4a4e55"/>
<rect x="963" y="148" width="1" height="2" fill="#4a4e55"/>
<rect x="975" y="147" width="1" height="4" fill="#4a4e55"/>
<rect x="987" y="148" width="1" height="2" fill="#4a4e55"/>
<rect x="999" y="148" width="1" height="2" fill="#4a4e55"/>
<rect x="1011" y="148" width="1" height="2" fill="#4a4e55"/>
<text x="1023" y="152.5" font-family="Liberation Sans" font-size="9.5" fill="#404652" font-weight="normal" font-style="normal" text-anchor="middle" textLength="5" lengthAdjust="spacingAndGlyphs" >7</text>
<rect x="1035" y="148" width="1" height="2" fill="#4a4e55"/>
<rect x="1047" y="148" width="1" height="2" fill="#4a4e55"/>
<rect x="1059" y="148" width="1" height="2" fill="#4a4e55"/>
<text x="256" y="152.5" font-family="Liberation Sans" font-size="9.5" fill="#404652" font-weight="normal" font-style="normal" text-anchor="middle" textLength="5" lengthAdjust="spacingAndGlyphs" >1</text>
<rect x="399" y="157" width="1" height="3" fill="#6a6f76"/>
<rect x="447" y="157" width="1" height="3" fill="#6a6f76"/>
<rect x="495" y="157" width="1" height="3" fill="#6a6f76"/>
<rect x="543" y="157" width="1" height="3" fill="#6a6f76"/>
<rect x="591" y="157" width="1" height="3" fill="#6a6f76"/>
<rect x="639" y="157" width="1" height="3" fill="#6a6f76"/>
<rect x="687" y="157" width="1" height="3" fill="#6a6f76"/>
<rect x="735" y="157" width="1" height="3" fill="#6a6f76"/>
<rect x="783" y="157" width="1" height="3" fill="#6a6f76"/>
<rect x="831" y="157" width="1" height="3" fill="#6a6f76"/>
<rect x="879" y="157" width="1" height="3" fill="#6a6f76"/>
<rect x="927" y="157" width="1" height="3" fill="#6a6f76"/>
<g shape-rendering="geometricPrecision">
<path d="M395.5 140.5 L404.5 140.5 L404.5 144 L400 148.5 L395.5 144 Z" fill="#e4e5e7" stroke="#7d838a"/>
<path d="M347.5 156 L347.5 152 L352 147.5 L356.5 152 L356.5 156 Z" fill="#e4e5e7" stroke="#7d838a"/>
<rect x="347.5" y="156.5" width="9" height="5" fill="#e4e5e7" stroke="#7d838a"/>
<path d="M971.5 155.5 L971.5 152 L976 147.5 L980.5 152 L980.5 155.5 Z" fill="#e4e5e7" stroke="#7d838a"/>
</g>
<rect x="-10.5" y="138.5" width="13" height="23" fill="#dcdee2" stroke="#858b93"/>
</svg>
<div id="shadowL"></div>
<div id="shadowL2"></div>
<div id="shadowR"></div>

<div id="page"></div>
<div id="text">
<div class="ln first" style="top:180.00px"><span class="s">Kemunculan</span> <span class="s">apa</span> yang <span class="s">mereka</span> <span class="s">katakan</span> <span class="s">seperti</span> <i>ninja</i> <span class="s">tahun</span> 522 <span class="s">berhubungan</span></div>
<div class="ln" style="top:204.00px"><span class="s">erat</span> <span class="s">dengan</span> <span class="s">munculnya</span> <i><span class="s">seni</span></i> <i>nonuse</i>. <span class="s">Seni</span> yang <span class="s">melakukan</span> <span class="s">tindakan</span> <span class="s">secara</span> <span class="s">diam-</span></div>
<div class="ln" style="top:229.00px"><span class="s">diam</span> <span class="s">dilakukan</span> <span class="s">oleh</span> <span class="s">pemuka</span> agama yang <span class="s">dituangkan</span> <span class="s">dalam</span> <span class="s">praktik</span> <span class="s">keagamaan</span></div>
<div class="ln" style="top:254.00px"><span class="s">mereka</span>. <span class="s">Tahun</span> 645 <span class="s">pendeta-pendeta</span> <span class="s">tersebut</span> <span class="s">menyempurnakan</span> <span class="s">kemampuan</span> <span class="s">bela</span></div>
<div class="ln" style="top:278.00px"><span class="s">diri</span> <span class="s">dan</span> <span class="s">menggunakan</span> <span class="s">pengetahuan</span> <span class="s">mereka</span> <span class="s">tentang</span> nonuse demi <span class="s">melindungi</span> <span class="s">diri</span></div>
<div class="ln" style="top:303.00px"><span class="s">dan</span> <span class="s">intimidasi</span> <span class="s">dari</span> <span class="s">pemerintah</span> <span class="s">pusat</span>. <span class="s">Tahun</span> 1500-an <span class="s">seni</span> nonuse <span class="s">mengalami</span></div>
<div class="ln" style="top:328.00px"><span class="s">perkembangan</span> <span class="s">revolusi</span> yang <span class="s">pada</span> <span class="s">saat</span> <span class="s">itu</span> era <span class="s">masyarakat</span> Jepang <span class="s">saling</span> <span class="s">berpisah</span></div>
<div class="ln" style="top:352.00px"><span class="s">karena</span> <span class="s">membentuk</span> <span class="s">klan-klan</span> <span class="s">masing-masing</span> <span class="s">berdasarkan</span> <span class="s">kekayaannya</span> <span class="s">dan</span> <span class="s">klan-</span></div>
<div class="ln" style="top:377.00px"><span class="s">klan</span> <span class="s">berlatar</span> <span class="s">belakang</span> samurai <span class="s">ditakuti</span> <span class="s">oleh-oleh</span> <span class="s">klan</span> <span class="s">biasa</span>. <span class="s">Antar</span> Klan-Klan</div>
<div class="ln" style="top:402.00px">Samurai <span class="s">saling</span> <span class="s">berperang</span>, <span class="s">masyarakat</span> <span class="s">luar</span> <span class="s">negeri</span> <span class="s">menyebutnya</span> <span class="s">sebagai</span> <span class="s">salah</span> <span class="s">satu</span></div>
<div class="ln" style="top:427.00px">era <span class="s">bergejolak</span> <span class="s">yaitu</span> <i>Sengoku</i>. Dari <span class="s">Zaman</span> <i>Sengoku</i> <span class="s">inilah</span> yang <span class="s">menjadi</span> <span class="s">cikal</span> <span class="s">bakal</span></div>
<div class="ln" style="top:451.00px"><span class="s">munculnya</span> <span class="s">eksistensi</span> <span class="s">dari</span> Ninja <span class="s">atau</span> <span class="s">Shinobi</span> <span class="s">itu</span> <span class="s">adalah</span> <span class="s">seseorang/sekelompok</span></div>
<div class="ln" style="top:476.00px">yang <span class="s">bergerak</span> <span class="s">secara</span> <span class="s">rahasia</span>. Ninja <span class="s">adalah</span> <span class="s">agen-agen</span> <span class="s">rahasia</span> <span class="s">atau</span> <span class="s">prajurit</span> <span class="s">Sewaan</span></div>
<div class="ln" style="top:501.00px"><span class="s">para</span> <span class="s">klan-klan</span> yang <span class="s">saling</span> <span class="s">berperang</span> <span class="s">pada</span> <span class="s">zaman</span> <span class="s">feodal</span>. <span class="s">Pekerjaan</span> <span class="s">mereka</span></div>
<div class="ln" style="top:525.00px"><span class="s">meliputi</span> <span class="s">melakukan</span> <span class="s">penyusupan</span>, <span class="s">mematai-matai</span>, <span class="s">sabotase</span>, <span class="s">menyusup</span>, <span class="s">bahkan</span></div>
<div class="ln" style="top:550.00px"><span class="s">membunuh</span>. Kata ninja <span class="s">secara</span> <span class="s">teknis</span> <span class="s">juga</span> <span class="s">diartikan</span> <span class="s">kepada</span> <span class="s">seseorang</span> yang</div>
<div class="ln" style="top:575.00px"><span class="s">menguasai</span> <span class="s">dan</span> <span class="s">mendalami</span> <span class="s">suatu</span> <span class="s">seni</span> <span class="s">bela</span> <span class="s">diri</span> yang <span class="s">disebut</span> <span class="s">Ninjutsu</span>. Ninja <span class="s">juga</span> di</div>
<div class="ln" style="top:599.00px"><span class="s">ambil</span> <span class="s">dari</span> kata  <span class="s">ninpo</span>. <span class="s">Ninpo</span> <span class="s">juga</span> <span class="s">merupakan</span> <span class="s">suatu</span> <span class="s">ideologi</span> yang di <span class="s">terapkan</span> di</div>
<div class="ln" style="top:624.00px"><span class="s">jiwa</span> <span class="s">dan</span> <span class="s">hati</span> <span class="s">para</span> ninja. <span class="s">Untuk</span> <span class="s">teknik</span> <span class="s">beladiri</span> <span class="s">ninjutsu</span> <span class="s">mereka</span> <span class="s">lebih</span></div>
<div class="ln" style="top:649.00px"><span class="s">menitikberatkan</span> <span class="s">pada</span> <span class="s">tendangan</span>, <span class="s">lemparan</span>, <span class="s">patahan</span>, <span class="s">dan</span> <span class="s">serangan</span>. <span class="s">Dalam</span></div>
<div class="ln" style="top:673.00px"><span class="s">praktiknya</span> <span class="s">biasanya</span> <span class="s">teknik</span> <span class="s">ninjutsu</span> <span class="s">dari</span> <span class="s">para</span> ninja yang <span class="s">tak</span> <span class="s">melakukan</span> <span class="s">serangan</span></div>
<div class="ln" style="top:698.00px"><span class="s">dengan</span> <span class="s">tangan</span> <span class="s">kosong</span> <span class="s">melainkan</span> <span class="s">dengan</span> <span class="s">menggunakan</span> <span class="s">senjata</span> <span class="s">tajam</span> <span class="s">seperti</span> <span class="s">pedang</span></div>
</div>
</body></html>
